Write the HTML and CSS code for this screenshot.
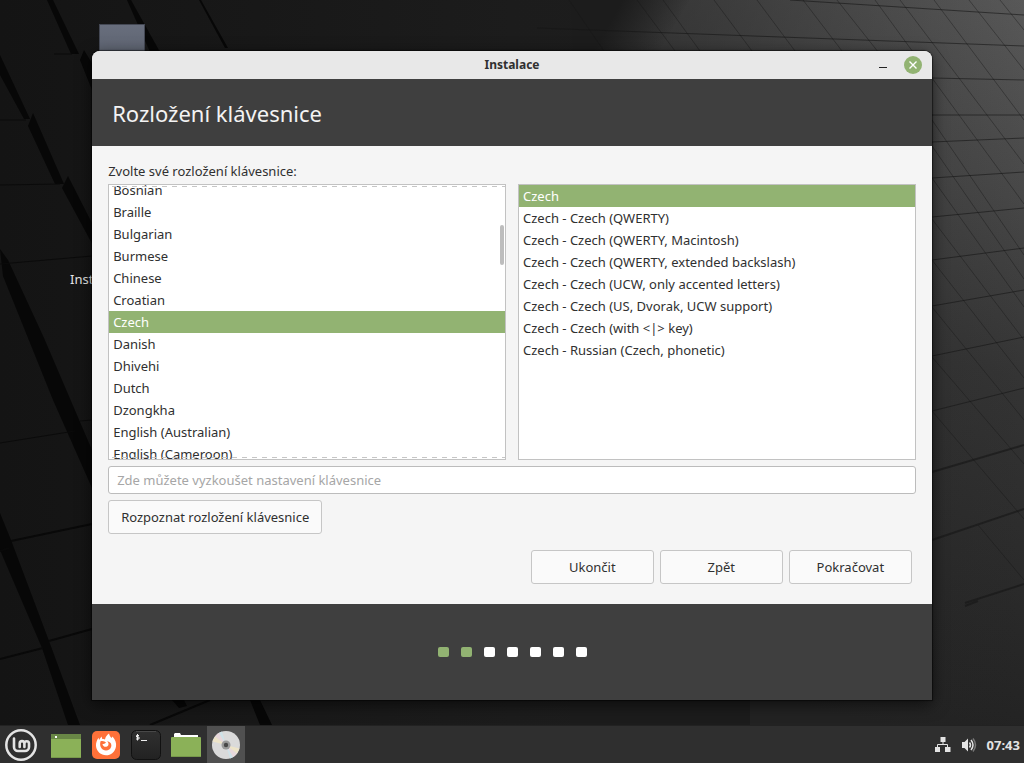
FILE: index.html
```html
<!DOCTYPE html>
<html lang="cs">
<head>
<meta charset="utf-8">
<title>Instalace</title>
<link rel="stylesheet" href="styles.css">
</head>
<body>
<svg class="wallpaper" viewBox="0 0 1024 763" preserveAspectRatio="xMidYMid slice" aria-hidden="true">
  <defs>
    <linearGradient id="base" x1="0" y1="0" x2="1" y2="0">
      <stop offset="0" stop-color="#141414"/><stop offset=".5" stop-color="#1c1c1c"/><stop offset="1" stop-color="#202020"/>
    </linearGradient>
    <linearGradient id="light" gradientUnits="userSpaceOnUse" x1="1024" y1="0" x2="860" y2="720">
      <stop offset="0" stop-color="#585858"/><stop offset=".25" stop-color="#484848"/><stop offset=".5" stop-color="#343434"/><stop offset="1" stop-color="#222"/>
    </linearGradient>
    <linearGradient id="fade" gradientUnits="userSpaceOnUse" x1="580" y1="10" x2="660" y2="55">
      <stop offset=".35" stop-color="#1c1c1c"/><stop offset="1" stop-color="#1c1c1c" stop-opacity="0"/>
    </linearGradient>
    <linearGradient id="dim" gradientUnits="userSpaceOnUse" x1="600" y1="0" x2="1024" y2="0">
      <stop offset="0" stop-color="#222" stop-opacity=".65"/><stop offset="1" stop-color="#222" stop-opacity="0"/>
    </linearGradient>
  </defs>
  <path fill="url(#base)" d="M0 0h1024v763H0z"/>
  <path fill="url(#light)" d="M580 0h444v763H580z"/>
  <path fill="url(#dim)" d="M580 0h444v763H580z"/>
  <path fill="url(#fade)" d="M570 0h120L580 180z"/>
  <path fill="#1c1c1c" d="M570 690h180v73H570z"/>
  <g fill="#070707">
    <path d="M47 0h6l26 54h-8z"/>
    <path d="M80 60l4-10 12 20v30z"/>
    <path d="M127 0h4l29 52h-10z"/>
    <path d="M199 0h2l27 48h-3z"/>
    <path d="M0 55l30 64h-6L0 75z"/>
    <path d="M28 126l5-13 31 71h-9z"/>
    <path d="M62 188l6-12 28 55v20z"/>
    <path d="M0 249l8 11 36 78 48 112v38L53 400 3 276z"/>
    <path d="M0 513l11 27 38 101 31 84H68L42 648 0 550z"/>
    <path d="M172 700h12l3 6-8 2zM250 700h10l12 25h-12z"/>
  </g>
  <path fill="none" stroke="#090909" stroke-width="2" d="M11 541l81-17M49 641l43-12M0 659l43-11M0 551l9-3M150 725l60-25"/>
  <path fill="none" stroke="#0b0b0b" d="M0 443l75-12M80 421l12-1M0 120h26M54 54h18M0 185l60-1M0 264l92-8"/>
  <g fill="none" stroke="#161616" stroke-opacity=".6">
    <path d="M790 0l234 15M537 28l487 18M932 78l92 2M932 115l92 0M932 142l92-4M932 178l92-6M932 217l92-9M932 260l92-12M932 306l92-16M932 356l92-19M932 411l92-23"/>
    <path stroke-width="2" d="M932 472l92-27M932 540l92-31M965 603l59-19M978 601l-13 5"/>
    <path stroke-opacity=".4" d="M569 0l35 51M637 0l38 51M663 0l37 51M714 0l38 51M757 0l38 51M803 0l39 51M837 0l95 120 92 135M875 0l149 204M900 0l124 164M934 0l90 120M969 0l55 70M1000 0l24 30M932 146l92 133M932 178l92 129M932 219l92 121M932 260l92 118M932 307l92 113M932 357l92 107M932 411l92 108M978 525l46 55"/>
  </g>
</svg>

<main class="desktop">
  <div class="desktop-folder"></div>
  <span class="desktop-label">Install Linux Mint</span>

  <section class="window" aria-labelledby="window-title">
    <header class="titlebar">
      <h1 class="window-title" id="window-title">Instalace</h1>
      <div class="window-controls">
        <button class="control minimize" type="button" aria-label="Minimalizovat"><svg viewBox="0 0 18 18"><path d="M5 11.500h8" stroke="#222" stroke-width="1"/></svg></button>
        <button class="control close" type="button" aria-label="Zavřít"><svg viewBox="0 0 18 18"><circle cx="9" cy="9" r="9" fill="#92b372"/><path d="M5.500 5.500l7 7m0-7l-7 7" stroke="#fff" stroke-width="1.400"/></svg></button>
      </div>
    </header>
    <div class="banner"><h2 class="banner-title">Rozložení klávesnice</h2></div>

    <form class="content">
      <p class="prompt" id="prompt">Zvolte své rozložení klávesnice:</p>
      <div class="lists">
        <div class="list-frame scrolled">
          <ul class="list" role="listbox" aria-labelledby="prompt">
            <li class="row" role="option">Bosnian</li>
            <li class="row" role="option">Braille</li>
            <li class="row" role="option">Bulgarian</li>
            <li class="row" role="option">Burmese</li>
            <li class="row" role="option">Chinese</li>
            <li class="row" role="option">Croatian</li>
            <li class="row selected" role="option" aria-selected="true">Czech</li>
            <li class="row" role="option">Danish</li>
            <li class="row" role="option">Dhivehi</li>
            <li class="row" role="option">Dutch</li>
            <li class="row" role="option">Dzongkha</li>
            <li class="row" role="option">English (Australian)</li>
            <li class="row" role="option">English (Cameroon)</li>
          </ul>
          <span class="scroll-thumb"></span>
        </div>
        <div class="list-frame">
          <ul class="list" role="listbox" aria-labelledby="prompt">
            <li class="row selected" role="option" aria-selected="true">Czech</li>
            <li class="row" role="option">Czech - Czech (QWERTY)</li>
            <li class="row" role="option">Czech - Czech (QWERTY, Macintosh)</li>
            <li class="row" role="option">Czech - Czech (QWERTY, extended backslash)</li>
            <li class="row" role="option">Czech - Czech (UCW, only accented letters)</li>
            <li class="row" role="option">Czech - Czech (US, Dvorak, UCW support)</li>
            <li class="row" role="option">Czech - Czech (with &lt;|&gt; key)</li>
            <li class="row" role="option">Czech - Russian (Czech, phonetic)</li>
          </ul>
        </div>
      </div>
      <input class="try-field" type="text" placeholder="Zde můžete vyzkoušet nastavení klávesnice" aria-label="Zde můžete vyzkoušet nastavení klávesnice">
      <button class="button detect" type="button">Rozpoznat rozložení klávesnice</button>
      <div class="actions">
        <button class="button" type="button">Ukončit</button>
        <button class="button" type="button">Zpět</button>
        <button class="button" type="button">Pokračovat</button>
      </div>
    </form>

    <footer class="steps">
      <span class="step done"></span><span class="step done"></span><span class="step"></span><span class="step"></span><span class="step"></span><span class="step"></span><span class="step"></span>
    </footer>
  </section>
</main>

<nav class="panel">
  <div class="launchers">
    <button class="launcher menu" type="button" aria-label="Menu">
      <svg width="32" height="32" viewBox="0 0 32 32" fill="none" stroke="#e4e4e4"><circle cx="16" cy="16" r="14.700" stroke-width="2.500"/><path stroke-width="2.600" stroke-linecap="round" stroke-linejoin="round" d="M9 9.500v8.500a4 4 0 0 0 4 4h7a4 4 0 0 0 4-4v-3.500a2.300 2.300 0 0 0-4.600 0V18m0-3.500a2.300 2.300 0 0 0-4.700 0V18"/></svg>
    </button>
    <button class="launcher" type="button" aria-label="Plocha">
      <svg width="32" height="32" viewBox="0 0 32 32"><path fill="#8bb158" d="M1 5h30v24H1z"/><path fill="#698746" d="M1 5h30v5H1z"/><path fill="#fff" d="M5 7h2v2H5z"/><path fill="#78994b" d="M1 28h30v1H1z"/></svg>
    </button>
    <button class="launcher" type="button" aria-label="Firefox">
      <svg width="32" height="32" viewBox="0 0 32 32"><rect x="2" y="2" width="28" height="28" rx="5" fill="#ff7139"/><path fill="#fff" d="M19 4.500c.4 2 1.300 3 2.500 4.500l1-1.500C25.500 11 26.500 14 26 17.500 25 23 21 26.300 16 26.300S6.500 22.500 6 17c-.2-3 .8-6 2.600-8.300L9 11l2.500-3.500.8 2.500c1 0 1.700.1 2.700.5C15.300 8 16.800 6 19 4.500z"/><path fill="#ff7139" d="M10.500 12.300c2.500-.7 4.500.3 5.500 1.200-1 1.500-2.500 1.500-3.500 1.500.3 3 4 4 5.800 1.300.6-1.600 0-3-1.300-4 3.500.3 4.700 3 4.300 5-.6 3-3 4.200-5.300 4.200-4 0-7-4-5.500-9.200z"/></svg>
    </button>
    <button class="launcher" type="button" aria-label="Terminál">
      <svg width="32" height="32" viewBox="0 0 32 32"><defs><linearGradient id="term" x1="0" y1="0" x2="0" y2="1"><stop stop-color="#303030"/><stop offset="1" stop-color="#222"/></linearGradient></defs><rect x="1.500" y="1.500" width="29" height="29" rx="5" fill="url(#term)" stroke="#111"/><path stroke="#484848" d="M6 2.500h20"/><path fill="none" stroke="#eee" stroke-width="1" d="M9 6.500H6.500V8H9v2H6M7.500 5v6.500M11 11.500h6"/></svg>
    </button>
    <button class="launcher" type="button" aria-label="Soubory">
      <svg width="32" height="32" viewBox="0 0 32 32"><path fill="#fff" d="M5 4h5l1 2h17v4H4V5z"/><rect x="1" y="8" width="30" height="20" rx="1" fill="#8bb158"/><path fill="#77984b" d="M1 27h30v1H1z"/></svg>
    </button>
    <button class="launcher active" type="button" aria-label="Instalace">
      <svg width="32" height="32" viewBox="0 0 32 32"><circle cx="16" cy="16" r="14" fill="#dadada"/><path fill="#e8d8dc" d="M16 16L5 7.500a14 14 0 0 1 4-3.700zM16 16l11 8.500a14 14 0 0 1-4 3.700z"/><path fill="#cfe2e8" d="M16 16L9 3.800l3-1.200zM16 16l7 12.200-3 1.200z"/><path fill="#ede4c9" d="M16 16L2.500 12.500 5 7.500zM16 16l13.500 3.500-2.500 5z"/><circle cx="16" cy="16" r="4.500" fill="#999"/><circle cx="16" cy="16" r="2.200" fill="#484848"/></svg>
    </button>
  </div>
  <div class="tray">
    <button class="tray-item" type="button" aria-label="Síť"><svg width="16" height="16" viewBox="0 0 16 16"><path fill="#e3e3e3" d="M5.500 0h5v5h-5zM0 10h5v5H0zM10 10h5.500v5H10z"/><path fill="none" stroke="#e3e3e3" d="M8 5v2.500M2.500 10V7.500h10V10"/></svg></button>
    <button class="tray-item" type="button" aria-label="Hlasitost"><svg width="16" height="16" viewBox="0 0 16 16"><path fill="#e3e3e3" d="M1 5h2.500L7 1.500v13L3.500 11H1z"/><path fill="none" stroke="#e3e3e3" stroke-width="1.500" d="M8.500 5.500q2 2.500 0 5M10 3q4 5 0 10"/><path fill="none" stroke="#777" stroke-width="1.500" d="M12 1.500q5 6.500 0 13"/></svg></button>
    <time class="clock">07:43</time>
  </div>
</nav>
</body>
</html>
```
FILE: styles.css
```css
* {
  box-sizing: border-box;
}

body {
  margin: 0;
  min-height: 100vh;
  display: flex;
  flex-direction: column;
  background: #171717;
  color: #303030;
  font: 13px/22px "Noto Sans", sans-serif;
}

button,
input {
  font: inherit;
  color: inherit;
}

.wallpaper {
  position: absolute;
  inset: 0;
  width: 100%;
  height: 100%;
}

.desktop {
  position: relative;
  flex: 1;
  display: flex;
  flex-direction: column;
  padding: 51px 9% 25px;
  overflow: hidden;
}

.desktop-folder {
  position: absolute;
  left: 99px;
  top: 24px;
  width: 46px;
  height: 40px;
  border: 1px solid #444854;
  background: linear-gradient(#686e7d, #5a606c);
}

.desktop-label {
  position: absolute;
  left: 70px;
  top: 268px;
  color: #e6e6e6;
  white-space: nowrap;
}

.window {
  position: relative;
  flex: 1;
  display: flex;
  flex-direction: column;
  border-radius: 8px 8px 0 0;
  background: #f5f5f5;
  box-shadow: 0 0 1px 1px rgba(0, 0, 0, .5), 0 4px 16px rgba(0, 0, 0, .6);
}

.titlebar {
  display: grid;
  grid-template-columns: 1fr auto 1fr;
  align-items: center;
  height: 28px;
  padding: 0 10px;
  border-radius: 8px 8px 0 0;
  background: #e8e8e8;
}

.window-title {
  grid-column: 2;
  margin: 0;
  font-size: 12px;
  font-weight: 700;
}

.window-controls {
  display: flex;
  justify-content: flex-end;
  gap: 12px;
}

.control {
  width: 18px;
  height: 18px;
  padding: 0;
  border: 0;
  background: none;
}

.control svg {
  display: block;
}

.banner {
  display: flex;
  align-items: center;
  height: 67px;
  padding: 0 20px;
  background: #3f3f3f;
}

.banner-title {
  margin: 0;
  color: #f3f3f3;
  font-size: 22px;
  font-weight: 400;
}

.content {
  flex: 1;
  display: flex;
  flex-direction: column;
  padding: 14px 16px 20px;
}

.prompt {
  margin: 0 0 2px;
}

.lists {
  display: grid;
  grid-template-columns: 1fr 1fr;
  gap: 12px;
}

.list-frame {
  position: relative;
  display: flex;
  flex-direction: column;
  height: 276px;
  border: 1px solid #c2c2c2;
  background: #fff;
  overflow: hidden;
}

.scrolled {
  justify-content: center;
}

.scrolled::before,
.scrolled::after {
  content: "";
  position: absolute;
  left: 3px;
  right: 0;
  height: 1px;
  background: repeating-linear-gradient(90deg, #c6c6c6 0 5px, transparent 5px 10px);
}

.scrolled::before {
  top: 1px;
}

.scrolled::after {
  bottom: 1px;
}

.list {
  margin: 0;
  padding: 0;
  list-style: none;
}

.row {
  height: 22px;
  padding: 0 4px;
}

.selected {
  background: #92b372;
  color: #fff;
}

.scroll-thumb {
  position: absolute;
  right: 1px;
  top: 40px;
  width: 4px;
  height: 40px;
  border-radius: 2px;
  background: #bdbdbd;
}

.try-field {
  height: 28px;
  margin-top: 6px;
  padding: 0 8px;
  border: 1px solid #bcbcbc;
  border-radius: 3px;
  background: #fff;
}

.try-field::placeholder {
  color: #a6a6a6;
  opacity: 1;
}

.button {
  height: 34px;
  padding: 0 12px;
  border: 1px solid #c6c6c6;
  border-radius: 3px;
  background: #fafafa;
}

.detect {
  align-self: flex-start;
  margin-top: 6px;
}

.actions {
  display: grid;
  grid-template-columns: repeat(3, 123px);
  justify-content: end;
  gap: 6px;
  margin-top: 16px;
  padding-right: 4px;
}

.steps {
  display: flex;
  align-items: center;
  justify-content: center;
  gap: 12px;
  height: 96px;
  background: #3f3f3f;
}

.step {
  width: 11px;
  height: 10px;
  border-radius: 2px;
  background: #fff;
}

.done {
  background: #92b372;
}

.panel {
  position: relative;
  display: flex;
  justify-content: space-between;
  height: 38px;
  border-top: 1px solid #222;
  background: #2f2f2f;
}

.launchers {
  display: flex;
  gap: 2px;
}

.launcher {
  display: flex;
  align-items: center;
  justify-content: center;
  width: 38px;
  padding: 0;
  border: 0;
  background: none;
}

.menu {
  width: 42px;
  margin-right: 3px;
}

.active {
  background: #505050;
}

.tray {
  display: flex;
  align-items: center;
  gap: 10px;
  padding-right: 4px;
}

.tray-item {
  display: flex;
  padding: 0;
  border: 0;
  background: none;
}

.clock {
  color: #e3e3e3;
  font-weight: 700;
}
```
